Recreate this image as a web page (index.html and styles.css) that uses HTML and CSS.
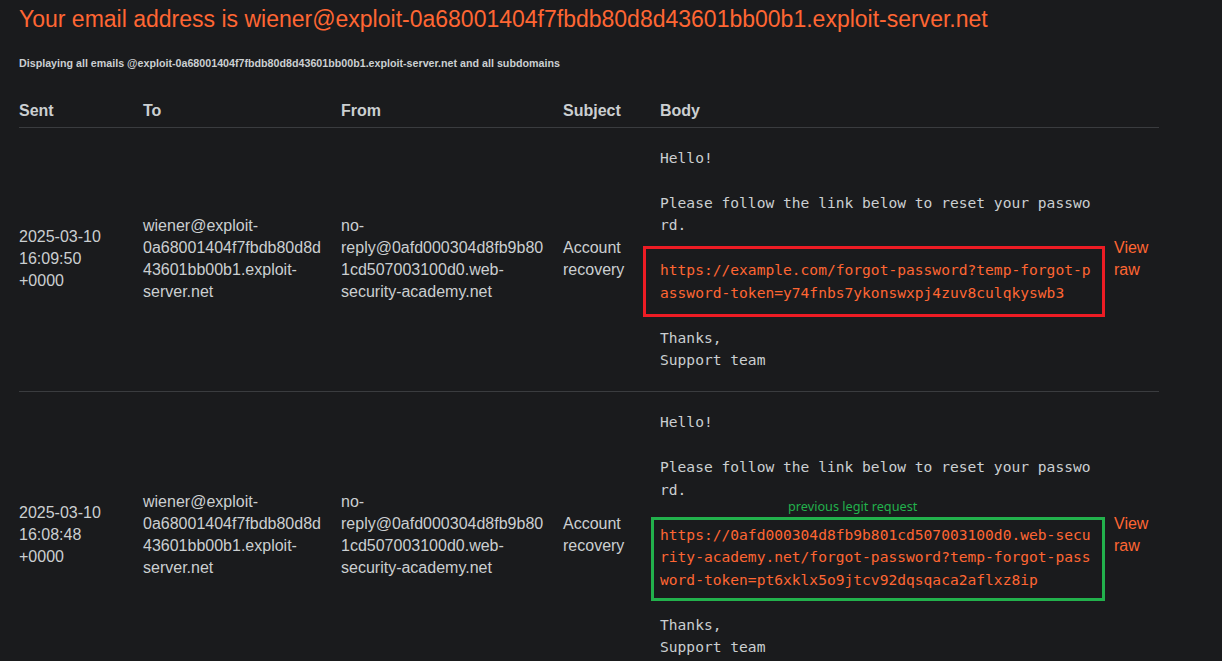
FILE: index.html
```html
<!DOCTYPE html>
<html>
<head>
<meta charset="utf-8">
<link rel="stylesheet" href="styles.css">
</head>
<body>
<div class="page">
  <h1 class="title">Your email address is wiener@exploit-0a68001404f7fbdb80d8d43601bb00b1.exploit-server.net</h1>
  <h4 class="subtitle">Displaying all emails @exploit-0a68001404f7fbdb80d8d43601bb00b1.exploit-server.net and all subdomains</h4>
  <table class="emails">
    <colgroup>
      <col class="c-sent"><col class="c-to"><col class="c-from"><col class="c-subject"><col class="c-body"><col class="c-raw">
    </colgroup>
    <thead>
      <tr><th>Sent</th><th>To</th><th>From</th><th>Subject</th><th>Body</th><th></th></tr>
    </thead>
    <tbody>
      <tr>
        <td>2025-03-10 16:09:50 +0000</td>
        <td>wiener@exploit-0a68001404f7fbdb80d8d43601bb00b1.exploit-server.net</td>
        <td>no-reply@0afd000304d8fb9b801cd507003100d0.web-security-academy.net</td>
        <td>Account recovery</td>
        <td>
          <div class="mail">
            <p>Hello!</p>
            <p>Please follow the link below to reset your password.</p>
            <p class="link">https://example.com/forgot-password?temp-forgot-password-token=y74fnbs7ykonswxpj4zuv8culqkyswb3<span class="annot annot-red"></span></p>
            <p>Thanks,<br>Support team</p>
          </div>
        </td>
        <td><a class="raw" href="#">View raw</a></td>
      </tr>
      <tr>
        <td>2025-03-10 16:08:48 +0000</td>
        <td>wiener@exploit-0a68001404f7fbdb80d8d43601bb00b1.exploit-server.net</td>
        <td>no-reply@0afd000304d8fb9b801cd507003100d0.web-security-academy.net</td>
        <td>Account recovery</td>
        <td>
          <div class="mail">
            <p>Hello!</p>
            <p>Please follow the link below to reset your password.</p>
            <p class="link">https://0afd000304d8fb9b801cd507003100d0.web-security-academy.net/forgot-password?temp-forgot-password-token=pt6xklx5o9jtcv92dqsqaca2aflxz8ip<span class="annot annot-green"></span><span class="note">previous legit request</span></p>
            <p>Thanks,<br>Support team</p>
          </div>
        </td>
        <td><a class="raw" href="#">View raw</a></td>
      </tr>
    </tbody>
  </table>
</div>
</body>
</html>
```

FILE: styles.css
```css
html, body {
  margin: 0;
  padding: 0;
  background: #1a1b1d;
}

body {
  font-family: "Liberation Sans", Arial, sans-serif;
  color: #cbcfd1;
  overflow: hidden;
}

.page {
  padding: 5px 0 0 19px;
}

.title {
  margin: 0;
  font-size: 23px;
  line-height: 28px;
  font-weight: normal;
  color: #ff6633;
}

.subtitle {
  margin: 23px 0 0;
  font-size: 10.7px;
  line-height: 14px;
  font-weight: bold;
  color: #cbcfd1;
}

.emails {
  margin-top: 30px;
  width: 1140px;
  table-layout: fixed;
  border-collapse: collapse;
  font-size: 16px;
  line-height: 22px;
}

.c-sent { width: 124px; }
.c-to { width: 198px; }
.c-from { width: 222px; }
.c-subject { width: 97px; }
.c-body { width: 454px; }
.c-raw { width: 45px; }

.emails th {
  text-align: left;
  font-weight: bold;
  padding: 0 0 5px;
  border-bottom: 1px solid #3a3c3f;
  color: #cbcfd1;
}

.emails td {
  padding: 19px 15px 20px 0;
  vertical-align: middle;
  border-bottom: 1px solid #3a3c3f;
  overflow-wrap: anywhere;
}

.emails td:last-child {
  padding-right: 0;
}

.mail {
  width: 435px;
  font-family: "DejaVu Sans Mono", Consolas, monospace;
  font-size: 14.6px;
  line-height: 22.45px;
  word-break: break-all;
  color: #cbcfd1;
}

.mail p {
  margin: 0 0 22.45px;
}

.mail p:last-child {
  margin-bottom: 0;
}

.link {
  position: relative;
  color: #ff6633;
}

.annot {
  position: absolute;
  border: 3px solid;
  box-sizing: border-box;
}

.annot-red {
  top: -13px;
  bottom: -13px;
  left: -17px;
  right: -10px;
  border-color: #ed1c24;
}

.annot-green {
  top: -7px;
  bottom: -10px;
  left: -9px;
  right: -10px;
  border-color: #22b14c;
}

.note {
  position: absolute;
  top: -25px;
  left: 128px;
  font-family: "Noto Sans", "Open Sans", sans-serif;
  font-size: 12.7px;
  line-height: 14px;
  color: #22b14c;
  word-break: normal;
  white-space: nowrap;
}

.raw {
  color: #ff6633;
  text-decoration: none;
}
```
